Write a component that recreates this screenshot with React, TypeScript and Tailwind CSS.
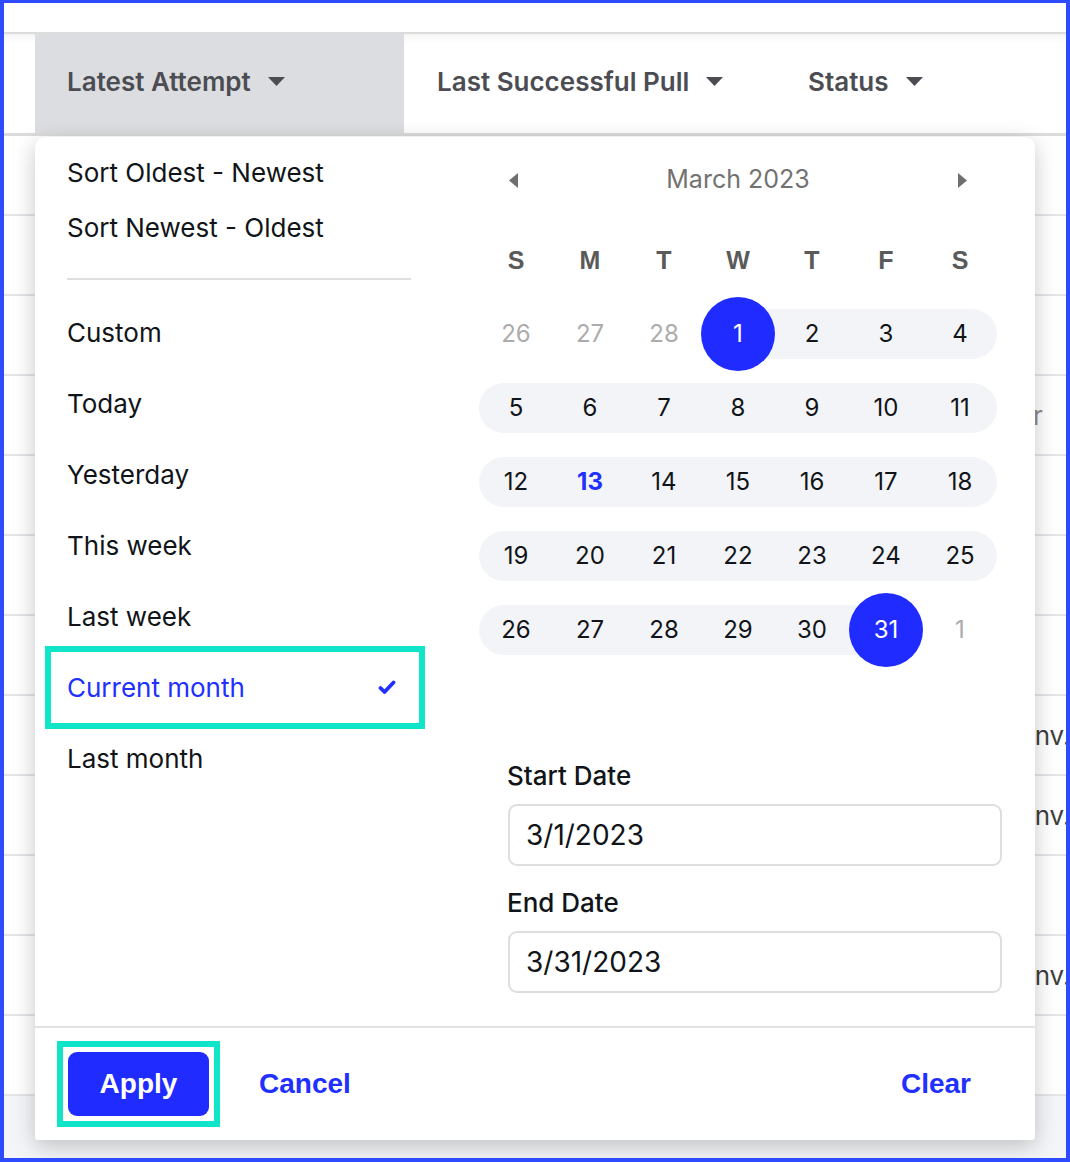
import React from "react";

const Caret = () => (
  <svg width="17" height="9" viewBox="0 0 17 9" className="ml-[17px]">
    <path d="M0 0 L17 0 L8.5 9 Z" fill="#4b4d52" />
  </svg>
);

const Check = () => (
  <svg width="18" height="15" viewBox="0 0 18 15">
    <path d="M2.5 8 L6.5 12 L15.5 2.5" fill="none" stroke="#2130ff" strokeWidth="3.8" strokeLinecap="round" strokeLinejoin="round" />
  </svg>
);

type Cell = { n: number; muted?: boolean; band?: "full" | "right" | "left"; sel?: boolean; today?: boolean };

const weeks: Cell[][] = [
  [
    { n: 26, muted: true },
    { n: 27, muted: true },
    { n: 28, muted: true },
    { n: 1, band: "right", sel: true },
    { n: 2, band: "full" },
    { n: 3, band: "full" },
    { n: 4, band: "full" },
  ],
  [5, 6, 7, 8, 9, 10, 11].map((n) => ({ n, band: "full" as const })),
  [12, 13, 14, 15, 16, 17, 18].map((n) => ({ n, band: "full" as const, today: n === 13 })),
  [19, 20, 21, 22, 23, 24, 25].map((n) => ({ n, band: "full" as const })),
  [
    { n: 26, band: "full" },
    { n: 27, band: "full" },
    { n: 28, band: "full" },
    { n: 29, band: "full" },
    { n: 30, band: "full" },
    { n: 31, band: "left", sel: true },
    { n: 1, muted: true },
  ],
];

const presets = ["Custom", "Today", "Yesterday", "This week", "Last week", "Current month", "Last month"];

const rowText: Record<number, { text: string; pl: string; color: string }> = {
  3: { text: "Or", pl: "pl-[1009px]", color: "text-[#8a8a8a]" },
  7: { text: "Env.", pl: "pl-[1015px]", color: "text-[#3f3f3f]" },
  8: { text: "Env.", pl: "pl-[1015px]", color: "text-[#3f3f3f]" },
  10: { text: "Env.", pl: "pl-[1015px]", color: "text-[#3f3f3f]" },
};

export default function App() {
  return (
    <div className="relative w-[1070px] h-[1162px] overflow-hidden bg-white border-[#2e4bff] border-x-4 border-t-[3px] border-b-4 font-['Inter','Noto_Sans',sans-serif]">
      <div className="h-[29px]" />
      {/* table header */}
      <div className="flex h-[104px] border-t-2 border-b-[3px] border-[#dcdcdc] shadow-[inset_0_8px_10px_-6px_rgba(0,0,0,0.07)] text-[26px] font-semibold text-[#4b4d52]">
        <div className="w-[31px]" />
        <div className="w-[369px] bg-[#dcdde0] flex items-center pl-[32px] pb-[4px]">
          <span>Latest Attempt</span>
          <Caret />
        </div>
        <div className="w-[372px] flex items-center pl-[33px] pb-[4px]">
          <span>Last Successful Pull</span>
          <Caret />
        </div>
        <div className="flex items-center pl-[32px] pb-[4px]">
          <span>Status</span>
          <Caret />
        </div>
      </div>
      {/* table rows */}
      {Array.from({ length: 12 }).map((_, i) => {
        const t = rowText[i];
        return (
          <div
            key={i}
            className={`h-[80px] border-b-2 border-[#e4e5e8] flex items-center whitespace-nowrap text-[26px] ${t ? t.pl + " " + t.color : ""}`}
          >
            {t ? t.text : null}
          </div>
        );
      })}
      <div className="h-[62px] bg-[#f4f5f8]" />

      {/* popup */}
      <div className="absolute left-[31px] top-[134px] w-[1000px] h-[1003px] bg-white rounded-t-[10px] rounded-b-[3px] shadow-[0_6px_22px_rgba(0,0,0,0.22)] flex flex-col">
        <div className="flex flex-1">
          {/* left presets */}
          <div className="w-[405px] pl-[16px] pt-[8px] text-[26px] text-[#111418]">
            <div className="h-[55px] flex items-center pl-[16px]">Sort Oldest - Newest</div>
            <div className="h-[55px] flex items-center pl-[16px]">Sort Newest - Oldest</div>
            <div className="ml-[16px] mt-[23px] w-[344px] h-[2px] bg-[#dfdfdf]" />
            <div className="mt-[17px]">
              {presets.map((p) => {
                const sel = p === "Current month";
                return (
                  <div
                    key={p}
                    className={`w-[368px] h-[71px] flex items-center justify-between pl-[16px] pr-[23px] ${
                      sel ? "outline-solid outline-[6px] outline-[#10e4c9] text-[#2130ff]" : ""
                    }`}
                  >
                    <span>{p}</span>
                    {sel ? <Check /> : null}
                  </div>
                );
              })}
            </div>
          </div>
          {/* calendar */}
          <div className="pl-[39px] pt-[6px]">
            <div className="w-[518px]">
              <div className="h-[74px] flex items-center">
                <div className="w-[74px] pl-[30px]">
                  <svg width="9" height="15" viewBox="0 0 9 15" className="block">
                    <path d="M9 0 L9 15 L0 7.5 Z" fill="#6f6f6f" />
                  </svg>
                </div>
                <div className="flex-1 text-center text-[25px] text-[#727272]">March 2023</div>
                <div className="w-[74px] pl-[35px]">
                  <svg width="9" height="15" viewBox="0 0 9 15" className="block">
                    <path d="M0 0 L0 15 L9 7.5 Z" fill="#6f6f6f" />
                  </svg>
                </div>
              </div>
              <div className="mt-[7px] h-[73px] grid grid-cols-7 items-center text-center text-[25px] font-bold text-[#5a5a5a] font-['Liberation_Sans',Arial,sans-serif]">
                {["S", "M", "T", "W", "T", "F", "S"].map((d, i) => (
                  <div key={i}>{d}</div>
                ))}
              </div>
              {weeks.map((w, wi) => (
                <div key={wi} className="grid grid-cols-7 h-[74px]">
                  {w.map((c, ci) => {
                    const bandPos =
                      c.band === "right" ? "left-1/2 right-0" : c.band === "left" ? "left-0 right-1/2" : "left-0 right-0";
                    const round = `${ci === 0 ? "rounded-l-full" : ""} ${ci === 6 ? "rounded-r-full" : ""}`;
                    return (
                      <div key={ci} className="relative h-[74px] w-[74px] flex items-center justify-center text-[24px]">
                        {c.band ? <div className={`absolute top-[12px] bottom-[12px] bg-[#f3f4f8] ${bandPos} ${round}`} /> : null}
                        {c.sel ? <div className="absolute inset-0 rounded-full bg-[#1f2bff]" /> : null}
                        <span
                          className={`relative ${
                            c.sel
                              ? "text-white"
                              : c.muted
                              ? "text-[#acacac]"
                              : c.today
                              ? "text-[#2130ff] font-bold"
                              : "text-[#111418]"
                          }`}
                        >
                          {c.n}
                        </span>
                      </div>
                    );
                  })}
                </div>
              ))}
            </div>
            <div className="ml-[29px] w-[494px]">
              <div className="mt-[94px] h-[30px] leading-[30px] text-[26px] font-medium text-[#111418] -ml-px">Start Date</div>
              <div className="mt-[13px] h-[62px] border-2 border-[#dedede] rounded-[9px] flex items-center pl-[16px] text-[28px] text-[#111418]">
                3/1/2023
              </div>
              <div className="mt-[22px] h-[30px] leading-[30px] text-[26px] font-medium text-[#111418] -ml-px">End Date</div>
              <div className="mt-[13px] h-[62px] border-2 border-[#dedede] rounded-[9px] flex items-center pl-[16px] text-[28px] text-[#111418]">
                3/31/2023
              </div>
            </div>
          </div>
        </div>
        {/* footer */}
        <div className="h-[114px] border-t-2 border-[#e2e2e2] flex items-center pl-[22px] pr-[64px] font-['Liberation_Sans',Arial,sans-serif] font-bold text-[28px]">
          <div className="border-[6px] border-[#10e4c9] p-[5px] bg-white">
            <button className="block w-[141px] h-[64px] rounded-[9px] bg-[#1f2bff] text-white">Apply</button>
          </div>
          <button className="ml-[39px] text-[#2130ff]">Cancel</button>
          <div className="flex-1" />
          <button className="text-[#2130ff]">Clear</button>
        </div>
      </div>
    </div>
  );
}
